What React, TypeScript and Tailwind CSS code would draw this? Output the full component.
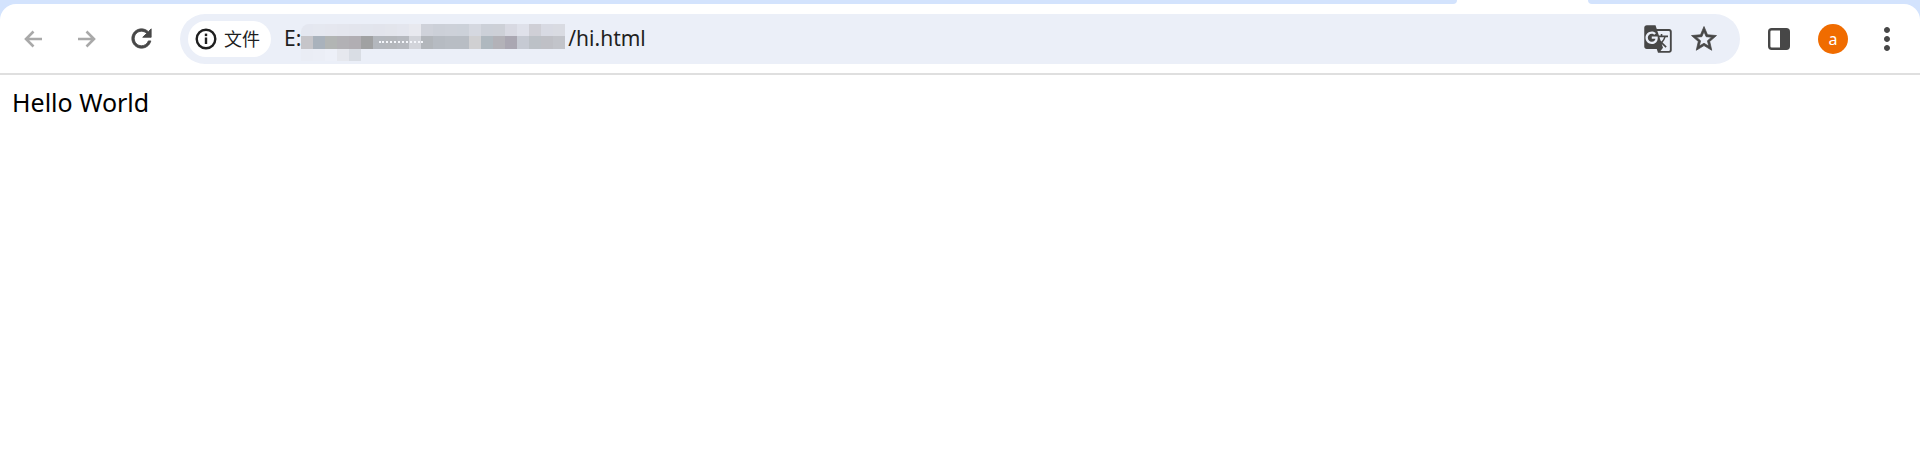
import React from 'react';
import { MdGTranslate, MdMoreVert } from 'react-icons/md';

const TOP_ROW = ['#e4e7f0', '#e5e8f0', '#e5e7ef', '#e4e6ee', '#e3e5ed', '#e2e5ed', '#e2e4ec', '#e3e5ec', '#e4e6ee', '#e8e9ef', '#cfd2da', '#ccd0d8', '#cdd1d9', '#ccd1d9', '#d5d8e0', '#ccd0d8', '#cdd0d7', '#d8d9e2', '#dfe1ea', '#cfcfd6', '#d8dae3', '#d9dbe2'];
const MID_ROW = ['#c6c5c9', '#a9b2bc', '#b2b5b4', '#b2b1b5', '#b1aeb3', '#a0a1a2', '#b3b7bd', '#b4b7bc', '#b6b9bf', '#d2d4da', '#b2b6bb', '#b6bbc2', '#b8bdc4', '#b8bdc4', '#d0d0d2', '#afb8bf', '#b3b2b8', '#aaa7b2', '#c6cad3', '#bcc1c7', '#bfc0c6', '#c2c4ca'];
const LOW_ROW = ['#eaedf5', '#ebeef6', '#edf0f8', '#e6e8ee', '#d9dde4'];

const App: React.FC = () => {
  return (
    <div className="h-[456px] bg-white font-['Noto_Sans','Noto_Sans_CJK_SC',sans-serif] text-black overflow-hidden">
      <div className="bg-[#d3e3fd]">
        {/* tab strip */}
        <div className="flex h-[4px] bg-white">
          <div className="w-[1457px] rounded-br-[4px] bg-[#d3e3fd]" />
          <div className="ml-[131px] flex-1 rounded-bl-[4px] bg-[#d3e3fd]" />
        </div>

        <div className="flex h-[69px] items-center rounded-t-[16px] bg-white">
          <div className="flex w-[180px] shrink-0 pl-[6px]">
            <div className="flex h-[54px] w-[54px] items-center justify-center">
              <svg width="24" height="24" viewBox="0 0 24 24" fill="none" stroke="#a9a9a9" strokeWidth="2.6">
                <path d="M21 12H5M12.5 4.5 5 12l7.5 7.5" />
              </svg>
            </div>
            <div className="flex h-[54px] w-[54px] items-center justify-center">
              <svg width="24" height="24" viewBox="0 0 24 24" fill="none" stroke="#a9a9a9" strokeWidth="2.6">
                <path d="M3 12h16M11.5 4.5 19 12l-7.5 7.5" />
              </svg>
            </div>
            <div className="flex h-[54px] w-[54px] items-center justify-center">
              <svg width="29" height="29" viewBox="0 0 24 24" fill="#474747" stroke="#474747" strokeWidth="0.7">
                <path d="M17.65 6.35C16.2 4.9 14.21 4 12 4c-4.42 0-7.99 3.58-7.99 8s3.57 8 7.99 8c3.73 0 6.84-2.55 7.73-6h-2.08c-.82 2.33-3.04 4-5.65 4-3.31 0-6-2.69-6-6s2.69-6 6-6c1.66 0 3.14.69 4.22 1.78L13 11h7V4l-2.35 2.35z" />
              </svg>
            </div>
          </div>

          <div className="flex h-[50px] w-[1560px] shrink-0 items-center rounded-full bg-[#ebeff8] pl-[8px] pr-[21px]">
            <div className="flex h-[36px] w-[83px] shrink-0 items-center rounded-full bg-white pl-[7px]">
              <svg width="22" height="22" viewBox="0 0 22 22" fill="none">
                <circle cx="11" cy="11" r="9.3" stroke="#1f1f1f" strokeWidth="2.4" />
                <rect x="9.8" y="9.5" width="2.4" height="6.5" fill="#1f1f1f" />
                <rect x="9.8" y="5.6" width="2.4" height="2.5" fill="#1f1f1f" />
              </svg>
              <span className="ml-[7px] text-[18px] leading-none text-[#1f1f1f]">文件</span>
            </div>

            <span className="ml-[13px] text-[21px] text-[#1f1f1f]">E:</span>
            <div className="relative mt-[8px] w-[267px] shrink-0">
              <div className="flex flex-col overflow-hidden rounded-tl-[8px]">
                <div className="flex">
                  {TOP_ROW.map((c, i) => (
                    <div key={i} className="h-[12px] w-[12px] shrink-0" style={{ background: c }} />
                  ))}
                </div>
                <div className="flex">
                  {MID_ROW.map((c, i) => (
                    <div key={i} className="h-[13px] w-[12px] shrink-0" style={{ background: c }} />
                  ))}
                </div>
                <div className="flex">
                  {LOW_ROW.map((c, i) => (
                    <div key={i} className="h-[12px] w-[12px] shrink-0" style={{ background: c }} />
                  ))}
                </div>
              </div>
              {/* leftover dots showing through the mosaic */}
              <div className="absolute left-[78px] top-[17px] w-[44px] border-t-2 border-dotted border-[#f4f6fb]" />
            </div>
            <span className="text-[21px] text-[#1f1f1f]">/hi.html</span>

            <div className="ml-auto flex items-center gap-[16px]">
              <MdGTranslate size={30} color="#474747" />
              <svg width="30" height="30" viewBox="0 0 24 24" fill="#474747" stroke="#474747" strokeWidth="0.6">
                <path d="M22 9.24l-7.19-.62L12 2 9.19 8.63 2 9.24l5.46 4.73L5.82 21 12 17.27 18.18 21l-1.63-7.03L22 9.24zM12 15.4l-3.76 2.27 1-4.28-3.32-2.88 4.38-.38L12 6.1l1.71 4.04 4.38.38-3.32 2.88 1 4.28L12 15.4z" />
              </svg>
            </div>
          </div>

          <div className="flex flex-1 items-center pl-[28px]">
            <svg width="22" height="22" viewBox="0 0 22 22" fill="none">
              <rect x="1.2" y="1.2" width="19.6" height="19.6" rx="2.5" stroke="#474747" strokeWidth="2.4" />
              <rect x="12" y="1.2" width="8.8" height="19.6" fill="#474747" />
            </svg>
            <div className="ml-[28px] flex h-[30px] w-[30px] items-center justify-center rounded-full bg-[#f06c00] text-[16px] text-white">
              a
            </div>
            <MdMoreVert size={36} color="#474747" className="ml-[21px]" />
          </div>
        </div>
      </div>

      <div className="h-[2px] bg-[#dfdfdf]" />
      <p className="pl-[12px] pt-[10px] text-[25px] leading-[34px] text-black">Hello World</p>
    </div>
  );
};

export default App;
